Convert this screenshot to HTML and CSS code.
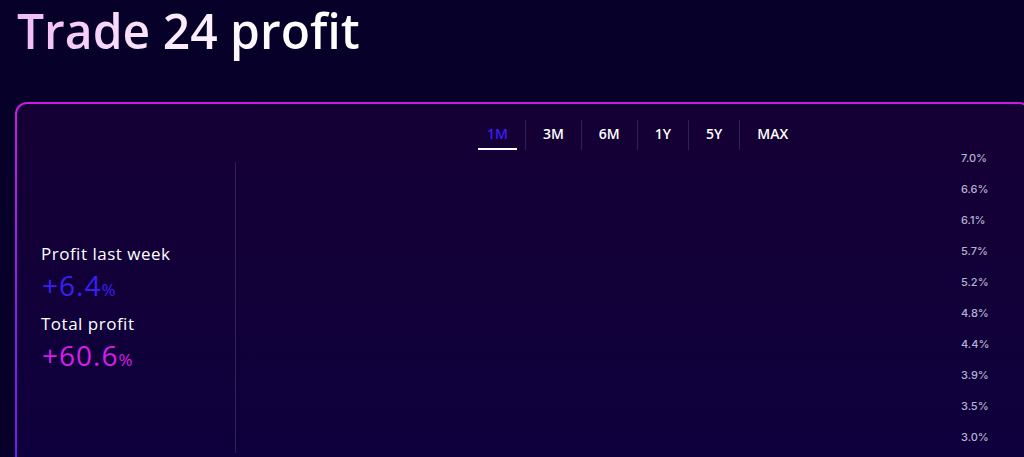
FILE: index.html
```html
<!DOCTYPE html>
<html lang="en">

<head>
	<meta charset="UTF-8">
	<meta name="viewport" content="width=device-width, initial-scale=1.0">
	<title>Trade 24 profit</title>
	<link rel="stylesheet" href="styles.css">
</head>

<body>
	<h1 class="page-title">Trade 24 profit</h1>

	<section class="profit-card">
		<ul class="range-tabs">
			<li><button class="range-btn active">1M</button></li>
			<li><button class="range-btn">3M</button></li>
			<li><button class="range-btn">6M</button></li>
			<li><button class="range-btn">1Y</button></li>
			<li><button class="range-btn">5Y</button></li>
			<li><button class="range-btn">MAX</button></li>
		</ul>

		<div class="card-body">
			<div class="stats">
				<div class="stat">
					<span class="stat-label">Profit last week</span>
					<span class="stat-value week">+6.4<small>%</small></span>
				</div>
				<div class="stat">
					<span class="stat-label">Total profit</span>
					<span class="stat-value total">+60.6<small>%</small></span>
				</div>
			</div>

			<div class="chart"></div>

			<ul class="y-axis">
				<li>7.0%</li>
				<li>6.6%</li>
				<li>6.1%</li>
				<li>5.7%</li>
				<li>5.2%</li>
				<li>4.8%</li>
				<li>4.4%</li>
				<li>3.9%</li>
				<li>3.5%</li>
				<li>3.0%</li>
			</ul>
		</div>
	</section>
</body>

</html>
```

FILE: styles.css
```css
html,
body {
	height: 457px;
	overflow: hidden;
}

body {
	margin: 0;
	background-color: #070028;
	font-family: 'Open Sans', sans-serif;
	color: #fff;
}

.page-title {
	display: inline-block;
	margin: 0;
	padding: 0 6px 0 17px;
	font-size: 48px;
	font-weight: 600;
	line-height: 62px;
	background: linear-gradient(90deg, #f0b6f5 0%, #fbe9fd 45%, #ffffff 80%);
	-webkit-background-clip: text;
	background-clip: text;
	color: transparent;
}

.profit-card {
	width: 1012px;
	height: 400px;
	margin: 40px 0 0 15px;
	padding-top: 16px;
	border: 2px solid transparent;
	border-radius: 12px;
	background:
		linear-gradient(180deg, #150034 0%, #0d003e 100%) padding-box,
		linear-gradient(180deg, #c81ce2 0%, #9a1de8 40%, #5a1ff0 100%) border-box;
}

.range-tabs {
	display: flex;
	list-style: none;
	margin: 0 0 0 452px;
	padding: 0;
}

.range-tabs li {
	padding: 0 8px;
	border-left: 1px solid #2c2356;
}

.range-tabs li:first-child {
	padding-left: 9px;
	border-left: none;
}

.range-btn {
	font-family: 'Open Sans', sans-serif;
	font-size: 14px;
	font-weight: 600;
	line-height: 20px;
	padding: 4px 9px 4px;
	border: none;
	border-bottom: 2px solid transparent;
	background: none;
	color: #fff;
	cursor: pointer;
}

.range-btn.active {
	color: #3d1df2;
	border-bottom-color: #fff;
}

.card-body {
	display: grid;
	grid-template-columns: 219px 1fr 68px;
	height: 300px;
}

.stats {
	margin-top: 12px;
	padding: 80px 0 0 24px;
	border-right: 1px solid #2c2356;
	display: flex;
	flex-direction: column;
	gap: 8px;
}

.stat {
	display: flex;
	flex-direction: column;
}

.stat-label {
	font-size: 17px;
	font-weight: 500;
	line-height: 24px;
	letter-spacing: 0.5px;
}

.stat-value {
	font-size: 28px;
	line-height: 38px;
	padding-left: 1px;
	letter-spacing: 1px;
}

.stat-value small {
	font-size: 17px;
	line-height: 1;
	letter-spacing: 0;
}

.week {
	color: #3b1ff2;
}

.total {
	color: #d41ee9;
}

.y-axis {
	list-style: none;
	margin: -7px 0 0;
	padding: 0;
	font-family: 'Inter', sans-serif;
	font-size: 11px;
	font-weight: 500;
	line-height: 31px;
	color: #b9b2d2;
}
```
